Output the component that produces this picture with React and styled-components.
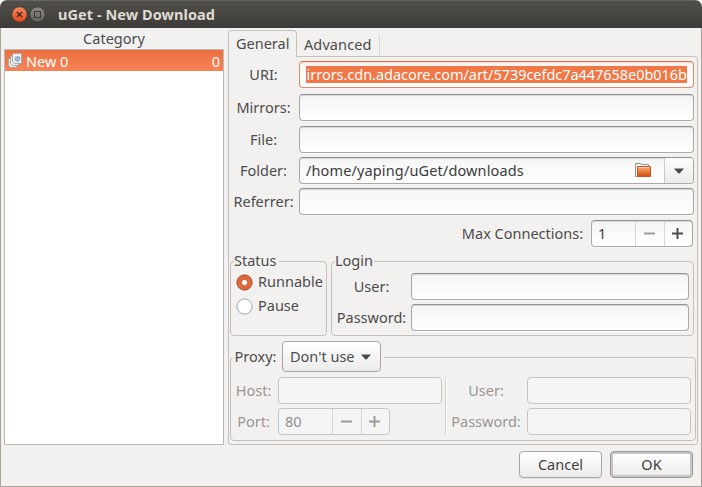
import React from "react";
import styled, { createGlobalStyle, css } from "styled-components";

const GlobalStyle = createGlobalStyle`
  * { box-sizing: border-box; }
  html, body { margin: 0; padding: 0; background: #fff; overflow: hidden; }
`;

const Window = styled.div`
  width: 702px;
  height: 487px;
  display: flex;
  flex-direction: column;
  overflow: hidden;
  border-radius: 7px 7px 0 0;
  background: #f2f1f0;
  color: #4c4c4c;
  font: 14.5px/20px "Noto Sans", "Open Sans", sans-serif;
  white-space: nowrap;
  cursor: default;
`;

const TitleBar = styled.header`
  height: 28px;
  flex: none;
  display: flex;
  align-items: center;
  padding: 0 0 1px 11px;
  border-top: 1px solid #65645d;
  background: linear-gradient(#514f4a, #3c3b37);
`;

const Title = styled.h1`
  margin: 0 0 0 11px;
  font-size: 14.5px;
  line-height: 20px;
  font-weight: 700;
  color: #dfdbd2;
  letter-spacing: 0.06px;
`;

const WindowIcon = styled.svg`
  display: block;
  width: 17px;
  height: 17px;
  margin-right: 1px;
`;

const Body = styled.div`
  flex: 1;
  min-height: 0;
  display: flex;
  flex-direction: column;
  border: 1px solid #a9a59d;
  border-top: 0;
`;

const Columns = styled.div`
  display: flex;
  height: 417px;
  padding: 2px 3px 0;
  gap: 4px;
`;

const Text = styled.span`
  margin-top: -2px;
  letter-spacing: ${(p) => p.$ls || 0}px;
`;

const Sidebar = styled.aside`
  width: 220px;
  display: flex;
  flex-direction: column;
`;

const SidebarHeader = styled.div`
  height: 19px;
  line-height: 17px;
  text-align: center;
`;

const List = styled.div`
  flex: 1;
  background: #fff;
  border: 1px solid #bcb8b3;
`;

const ListRow = styled.div`
  height: 21px;
  display: flex;
  align-items: center;
  padding: 0 3px;
  color: #fff;
  background: linear-gradient(#ea6f3f, #f88355);
`;

const RowName = styled.span`
  flex: 1;
  margin-left: 4px;
`;

const Notebook = styled.section`
  width: 470px;
  display: flex;
  flex-direction: column;
`;

const Tabs = styled.nav`
  height: 26px;
  display: flex;
  position: relative;
  z-index: 1;
`;

const Tab = styled.div`
  ${(p) =>
    p.$active
      ? css`
          width: 69px;
          height: 27px;
          padding-left: 7px;
          border: 1px solid #c5c0bb;
          border-bottom: 0;
          border-radius: 4px 4px 0 0;
          background: #f2f1f0;
          line-height: 25px;
        `
      : css`
          width: 83px;
          height: 22px;
          margin-top: 4px;
          padding-left: 7px;
          line-height: 20px;
          border-right: 1px solid #dcd9d6;
        `}
`;

const Page = styled.div`
  flex: 1;
  min-height: 0;
  padding: 4px 1px 0;
  border: 1px solid #c5c0bb;
  border-radius: 0 3px 3px 3px;
`;

const Field = styled.div`
  display: flex;
  align-items: center;
  height: 27px;
  margin-top: ${(p) => p.$top || 0}px;
  color: ${(p) => (p.$disabled ? "#999693" : "inherit")};
`;

const Label = styled.label`
  width: ${(p) => p.$w}px;
  margin-top: -2px;
  padding-right: ${(p) => p.$pad ?? 2}px;
  text-align: center;
`;

const Entry = styled.div`
  width: ${(p) => p.$w}px;
  height: 27px;
  display: flex;
  align-items: center;
  overflow: hidden;
  padding-left: 6px;
  border: 1px solid #a9a9a9;
  border-top-color: #8f8f8f;
  border-radius: 4px;
  background: linear-gradient(#f5f5f5, #fff);
  color: #3c3c3c;
  box-shadow: inset 0 1px 1px rgba(0, 0, 0, 0.13), 0 1px 0 rgba(255, 255, 255, 0.5);
  ${(p) => p.$focus && css`border-color: #e58a66; border-top-color: #dc7149; box-shadow: inset 0 1px 1px rgba(240, 119, 70, 0.25);`}
  ${(p) => p.$disabled && css`border-color: #c6c5c4; background: #f5f5f5; color: #8e8e8e; box-shadow: none;`}
`;

const Selection = styled.div`
  width: 381px;
  height: 17px;
  display: flex;
  justify-content: flex-end;
  background: #f07746;
  color: #fff;
  line-height: 17px;
`;

const SelectedText = styled.span`
  letter-spacing: -0.04px;
`;

const FolderText = styled(Text)`
  flex: 1;
`;

const DropCell = styled.div`
  width: 29px;
  height: 25px;
  margin-left: 12px;
  display: flex;
  align-items: center;
  justify-content: center;
  border-left: 1px solid #cbcac9;
  background: linear-gradient(#fdfdfd, #ebebea);
`;

const Arrow = styled.svg`
  display: block;
  width: 10px;
  height: 6px;
`;

const Value = styled.span`
  flex: 1;
  margin-top: -2px;
`;

const Step = styled.div`
  width: ${(p) => (p.$last ? 28 : 29)}px;
  height: 25px;
  display: flex;
  align-items: center;
  justify-content: center;
  padding-right: 2px;
  border-left: 1px solid #d7d7d7;
  color: ${(p) => (p.$muted ? "#a09c98" : "#4c4c4c")};
`;

const MaxRow = styled(Field)`
  justify-content: flex-end;
  padding-right: 3px;
`;

const Frames = styled.div`
  display: flex;
  gap: 4px;
  margin-top: 14px;
`;

const Frame = styled.section`
  width: ${(p) => p.$w}px;
  height: ${(p) => p.$h}px;
  border: 1px solid #c5c0bb;
  border-radius: 4px;
`;

const Legend = styled.div`
  width: ${(p) => p.$w}px;
  height: 20px;
  margin: -12px 0 0 3px;
  background: #f2f1f0;
`;

const ProxyLegend = styled.div`
  width: 151px;
  height: 31px;
  margin: -17px 0 0 2px;
  display: flex;
  align-items: center;
  background: #f2f1f0;
`;

const RadioRow = styled.div`
  display: flex;
  align-items: center;
  height: 24px;
  padding-left: 5px;
  gap: 5px;
`;

const Radio = styled.svg`
  display: block;
  width: 17px;
  height: 17px;
`;

const Combo = styled.div`
  width: 99px;
  height: 31px;
  margin-left: 4px;
  display: flex;
  align-items: center;
  justify-content: space-between;
  padding: 0 9px 0 7px;
  border: 1px solid #aaa7a4;
  border-radius: 4px;
  background: linear-gradient(#fff, #ebebea);
`;

const ProxyFrame = styled(Frame)`
  margin-top: 21px;
`;

const ProxyColumns = styled.div`
  display: flex;
  margin-top: 4px;
`;

const ProxyColumn = styled.div`
  padding-top: 1px;
  width: ${(p) => p.$w}px;
`;

const Separator = styled.div`
  width: 2px;
  height: 60px;
  border-left: 1px solid #d3d0cd;
  border-right: 1px solid #fff;
`;

const Actions = styled.footer`
  display: flex;
  justify-content: flex-end;
  gap: 8px;
  padding: 6px 8px 0 0;
`;

const Button = styled.button`
  width: 83px;
  height: 27px;
  padding: 0 0 2px;
  border: 1px solid ${(p) => (p.$primary ? "#969594" : "#a9a7a4")};
  border-radius: 4px;
  background: linear-gradient(#fff, #ebebea);
  color: #3f3f3f;
  font: inherit;
  box-shadow: ${(p) => (p.$primary ? "inset 0 0 0 2px #c6c6c6" : "0 1px 0 rgba(0,0,0,.06)")};
`;

const Down = () => (
  <Arrow viewBox="0 0 10 6"><path d="M0 .5H10L6 5Q5 6 4 5Z" fill="#4a4a4a" /></Arrow>
);

const Sign = ({ plus }) => (
  <svg width="11" height="11" viewBox="0 0 11 11">
    <path d={plus ? "M0 5.5H11M5.5 0V11" : "M0 5.5H11"} stroke="currentColor" strokeWidth="2" fill="none" />
  </svg>
);

const CloseIcon = () => (
  <WindowIcon viewBox="0 0 17 17">
    <defs><linearGradient id="close" x2="0" y2="1"><stop stopColor="#f58b63" /><stop offset="1" stopColor="#df4b1b" /></linearGradient></defs>
    <circle cx="8.5" cy="8.5" r="7.7" fill="url(#close)" stroke="#33302b" strokeWidth=".7" />
    <path d="M5.9 5.9L11.1 11.1M11.1 5.9L5.9 11.1" stroke="#4b2416" strokeWidth="1.4" />
  </WindowIcon>
);

const MaximizeIcon = () => (
  <WindowIcon viewBox="0 0 17 17">
    <defs><linearGradient id="max" x2="0" y2="1"><stop stopColor="#8b8981" /><stop offset="1" stopColor="#65635c" /></linearGradient></defs>
    <circle cx="8.5" cy="8.5" r="7.6" fill="url(#max)" stroke="#34332f" strokeWidth=".7" />
    <rect x="5.5" y="5.5" width="6" height="6" fill="none" stroke="#3b3a36" />
  </WindowIcon>
);

const CategoryIcon = () => (
  <svg width="14" height="15" viewBox="0 0 14 15">
    <path d="M.5 5.5H8.5V14.5H2.5L.5 12.5Z" fill="#eeeeec" stroke="#a5a6a1" />
    <path d="M2.5 3H10.5V12.5H4.5L2.5 10.5Z" fill="#eeeeec" stroke="#a5a6a1" />
    <path d="M4.5.5H13.5V10.5H6.5L4.5 8.5Z" fill="#f1f1ef" stroke="#a5a6a1" />
    <circle cx="9.5" cy="6" r="2.3" fill="#a9c0db" stroke="#7f9fc6" />
    <path d="M7.5 3.5L9.5 5.5L11.5 3.5" fill="none" stroke="#8aa3c0" />
  </svg>
);

const FolderIcon = () => (
  <svg width="17" height="15" viewBox="0 0 17 15">
    <defs><linearGradient id="folder" x2="0" y2="1"><stop stopColor="#f2b184" /><stop offset=".5" stopColor="#e8813f" /><stop offset="1" stopColor="#d4480f" /></linearGradient></defs>
    <path d="M2.5 13.5H.5V.5H5.5L7 1.5H13.5V3" fill="#f7f6f5" stroke="#969490" />
    <path d="M2.5 13.5V3.5H15.5V13.5Z" fill="url(#folder)" stroke="#cb5424" />
    <path d="M3.5 4.5H14.5" stroke="#f6c7a4" />
  </svg>
);

const RadioMark = ({ checked }) => (
  <Radio viewBox="0 0 17 17">
    <circle cx="8.5" cy="8.5" r="7.6" fill={checked ? "#e0673a" : "#fff"} stroke={checked ? "#a84824" : "#a5a5a5"} />
    {checked && <circle cx="8.5" cy="8.5" r="3.1" fill="#fff" stroke="#b94f28" strokeWidth=".8" />}
  </Radio>
);

const FormField = ({ label, top, children }) => (
  <Field $top={top}><Label $w={69}>{label}</Label>{children || <Entry $w={395} />}</Field>
);

export default function App() {
  return (
    <>
      <GlobalStyle />
      <Window>
        <TitleBar><CloseIcon /><MaximizeIcon /><Title>uGet - New Download</Title></TitleBar>
        <Body>
          <Columns>
            <Sidebar>
              <SidebarHeader>Category</SidebarHeader>
              <List>
                <ListRow><CategoryIcon /><RowName>New 0</RowName><span>0</span></ListRow>
              </List>
            </Sidebar>
            <Notebook>
              <Tabs>
                <Tab $active>General</Tab>
                <Tab><Text $ls={0.1}>Advanced</Text></Tab>
              </Tabs>
              <Page>
                <FormField label="URI:">
                  <Entry $w={395} $focus>
                    <Selection><SelectedText>irrors.cdn.adacore.com/art/5739cefdc7a447658e0b016b</SelectedText></Selection>
                  </Entry>
                </FormField>
                <FormField label="Mirrors:" top={6} />
                <FormField label="File:" top={5} />
                <FormField label="Folder:" top={4}>
                  <Entry $w={395}>
                    <FolderText $ls={0.13}>/home/yaping/uGet/downloads</FolderText>
                    <FolderIcon />
                    <DropCell><Down /></DropCell>
                  </Entry>
                </FormField>
                <FormField label="Referrer:" top={4} />
                <MaxRow $top={5}>
                  <Label $w={137} $pad={0}>Max Connections:</Label>
                  <Entry $w={102}><Value>1</Value><Step $muted><Sign /></Step><Step $last><Sign plus /></Step></Entry>
                </MaxRow>
                <Frames>
                  <Frame $w={97} $h={75}>
                    <Legend $w={45}>Status</Legend>
                    <RadioRow><RadioMark checked /><Text>Runnable</Text></RadioRow>
                    <RadioRow><RadioMark /><Text>Pause</Text></RadioRow>
                  </Frame>
                  <Frame $w={363} $h={75}>
                    <Legend $w={39}>Login</Legend>
                    <Field $top={3}><Label $w={79} $pad={0}>User:</Label><Entry $w={278} /></Field>
                    <Field $top={4}><Label $w={79} $pad={0}>Password:</Label><Entry $w={278} /></Field>
                  </Frame>
                </Frames>
                <ProxyFrame $w={466} $h={84}>
                  <ProxyLegend><Label $w={45} $pad={0}>Proxy:</Label><Combo><Text>Don't use</Text><Down /></Combo></ProxyLegend>
                  <ProxyColumns>
                    <ProxyColumn $w={214}>
                      <Field $disabled><Label $w={47}>Host:</Label><Entry $w={164} $disabled /></Field>
                      <Field $disabled $top={4}>
                        <Label $w={47}>Port:</Label>
                        <Entry $w={112} $disabled><Value>80</Value><Step $muted><Sign /></Step><Step $muted $last><Sign plus /></Step></Entry>
                      </Field>
                    </ProxyColumn>
                    <Separator />
                    <ProxyColumn $w={244}>
                      <Field $disabled><Label $w={80}>User:</Label><Entry $w={164} $disabled /></Field>
                      <Field $disabled $top={4}><Label $w={80}>Password:</Label><Entry $w={164} $disabled /></Field>
                    </ProxyColumn>
                  </ProxyColumns>
                </ProxyFrame>
              </Page>
            </Notebook>
          </Columns>
          <Actions><Button>Cancel</Button><Button $primary>OK</Button></Actions>
        </Body>
      </Window>
    </>
  );
}
